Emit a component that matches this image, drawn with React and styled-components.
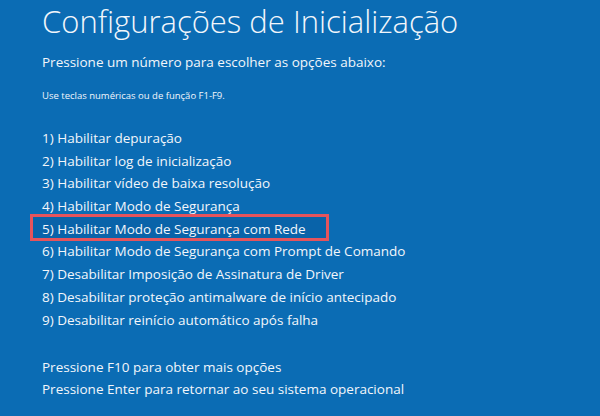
import styled, { createGlobalStyle } from 'styled-components';

const GlobalStyle = createGlobalStyle`
	html, body {
		margin: 0;
		padding: 0;
		background: #0b6cb4;
	}
	body {
		font-family: 'Open Sans', 'Noto Sans', sans-serif;
		color: #f2f6fb;
	}
`;

const SScreen = styled.div`
	width: 600px;
	height: 416px;
	box-sizing: border-box;
	padding-left: 42px;
	background: #0b6cb4;
	overflow: hidden;
	isolation: isolate;
`;

const STitle = styled.h1`
	margin: 0;
	font-size: 31px;
	font-weight: 300;
	line-height: 43px;
	white-space: nowrap;
`;

const SPrompt = styled.p`
	margin: 8px 0 0;
	font-size: 13.5px;
	line-height: 22px;
`;

const SHint = styled.p`
	margin: 15px 0 0;
	font-size: 9.5px;
	line-height: 16px;
`;

const SList = styled.ul`
	list-style: none;
	margin: 23px 0 0;
	padding: 0;
`;

const SItem = styled.li`
	position: relative;
	font-size: 13.5px;
	line-height: 22.7px;
	height: 22.7px;
	white-space: nowrap;

	${({ marked }) =>
		marked &&
		`
		&::before {
			content: '';
			position: absolute;
			top: -4px;
			bottom: -1px;
			left: -12px;
			width: 299px;
			border: 3px solid #e6545c;
			box-sizing: border-box;
			background: rgba(0, 40, 90, 0.12);
			z-index: -1;
		}
	`}
`;

const SFooter = styled.div`
	margin-top: 25px;
`;

const SFooterLine = styled.p`
	margin: 0;
	font-size: 13.5px;
	line-height: 22.3px;
`;

const options = [
	'Habilitar depuração',
	'Habilitar log de inicialização',
	'Habilitar vídeo de baixa resolução',
	'Habilitar Modo de Segurança',
	'Habilitar Modo de Segurança com Rede',
	'Habilitar Modo de Segurança com Prompt de Comando',
	'Desabilitar Imposição de Assinatura de Driver',
	'Desabilitar proteção antimalware de início antecipado',
	'Desabilitar reinício automático após falha',
];

const App = () => (
	<>
		<GlobalStyle />
		<SScreen>
			<STitle>Configurações de Inicialização</STitle>
			<SPrompt>Pressione um número para escolher as opções abaixo:</SPrompt>
			<SHint>Use teclas numéricas ou de função F1-F9.</SHint>
			<SList>
				{options.map((text, i) => (
					<SItem key={text} marked={i === 4}>
						{`${i + 1}) ${text}`}
					</SItem>
				))}
			</SList>
			<SFooter>
				<SFooterLine>Pressione F10 para obter mais opções</SFooterLine>
				<SFooterLine>Pressione Enter para retornar ao seu sistema operacional</SFooterLine>
			</SFooter>
		</SScreen>
	</>
);

export default App;
